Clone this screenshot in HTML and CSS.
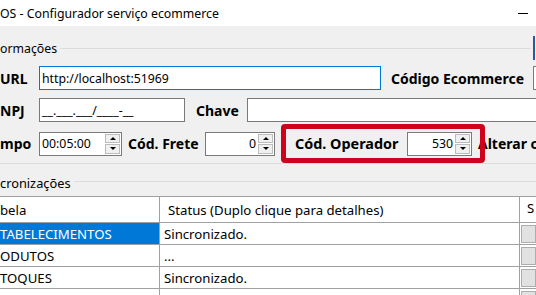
FILE: index.html
```html
<!DOCTYPE html>
<html lang="pt-BR">
<head>
    <meta charset="UTF-8">
    <title>Configurador serviço ecommerce</title>
    <link rel="stylesheet" href="styles.css">
</head>
<body>
    <div class="titlebar">
        <span class="title">OS - Configurador serviço ecommerce</span>
        <span class="minimize"></span>
    </div>

    <div class="client">
        <section class="group group-info">
            <div class="group-header">
                <span class="group-title">ormações</span>
                <span class="group-line"></span>
                <span class="focus-edge"></span>
            </div>

            <div class="form-row row-url">
                <span class="field-label lbl-first">URL</span>
                <div class="textbox focused tb-url">http://localhost:51969</div>
                <span class="field-label lbl-ecommerce">Código Ecommerce</span>
                <div class="textbox tb-overflow"></div>
            </div>

            <div class="form-row row-cnpj">
                <span class="field-label lbl-first">NPJ</span>
                <div class="textbox tb-cnpj">__.___.___/____-__</div>
                <span class="field-label lbl-chave">Chave</span>
                <div class="textbox tb-chave"></div>
            </div>

            <div class="form-row row-tempo">
                <span class="field-label lbl-first">mpo</span>
                <div class="spinbox sb-tempo">
                    <span class="spin-value left">00:05:00</span>
                    <span class="spin-buttons"><span class="spin-up"></span><span class="spin-down"></span></span>
                </div>
                <span class="field-label lbl-frete">Cód. Frete</span>
                <div class="spinbox sb-frete">
                    <span class="spin-value">0</span>
                    <span class="spin-buttons"><span class="spin-up"></span><span class="spin-down"></span></span>
                </div>
                <div class="highlight">
                    <span class="field-label lbl-operador">Cód. Operador</span>
                    <div class="spinbox sb-operador">
                        <span class="spin-value">530</span>
                        <span class="spin-buttons"><span class="spin-up"></span><span class="spin-down"></span></span>
                    </div>
                </div>
                <span class="field-label lbl-alterar">Alterar c</span>
            </div>
        </section>

        <section class="group group-sync">
            <div class="group-header">
                <span class="group-title">cronizações</span>
                <span class="group-line"></span>
            </div>

            <div class="grid">
                <div class="grid-row grid-head">
                    <div class="cell">bela</div>
                    <div class="cell col-status">Status (Duplo clique para detalhes)</div>
                    <div class="cell col-action">S</div>
                </div>
                <div class="grid-row">
                    <div class="cell selected">TABELECIMENTOS</div>
                    <div class="cell col-status">Sincronizado.</div>
                    <div class="cell col-action"><span class="cell-button"></span></div>
                </div>
                <div class="grid-row">
                    <div class="cell">ODUTOS</div>
                    <div class="cell col-status">...</div>
                    <div class="cell col-action"><span class="cell-button"></span></div>
                </div>
                <div class="grid-row">
                    <div class="cell">TOQUES</div>
                    <div class="cell col-status">Sincronizado.</div>
                    <div class="cell col-action"><span class="cell-button"></span></div>
                </div>
                <div class="grid-row">
                    <div class="cell"></div>
                    <div class="cell col-status"></div>
                    <div class="cell col-action"><span class="cell-button"></span></div>
                </div>
            </div>
        </section>
    </div>
</body>
</html>
```

FILE: styles.css
```css
:root {
    --window: #f0f0f0;
    --text: #000000;
    --border: #7a7a7a;
    --focus: #0078d7;
    --group-line: #dcdcdc;
    --grid-line: #a0a0a0;
    --button: #e1e1e1;
    --button-border: #adadad;
    --highlight: #d0021b;
}

* {
    margin: 0;
    padding: 0;
    box-sizing: border-box;
}

body {
    width: 536px;
    height: 295px;
    overflow: hidden;
    background-color: var(--window);
    color: var(--text);
    font-family: "Noto Sans", "DejaVu Sans", sans-serif;
    font-size: 12.3px;
}

.titlebar {
    height: 26px;
    background-color: #ffffff;
    display: flex;
    align-items: center;
    justify-content: space-between;
    padding-right: 8px;
}

.minimize {
    width: 10px;
    height: 1px;
    background-color: #000000;
}

.client {
    padding-top: 10px;
}

.group-header {
    height: 24px;
    display: flex;
    align-items: center;
}

.group-title {
    padding-right: 3px;
    white-space: nowrap;
}

.group-line {
    flex: 1;
    height: 1px;
    background-color: var(--group-line);
}

.focus-edge {
    width: 2px;
    height: 24px;
    margin: 0 1px 0 2px;
    background-color: #2d5a9c;
}

.group-info {
    border-bottom: 1px solid var(--group-line);
}

.form-row {
    display: flex;
    align-items: center;
    white-space: nowrap;
}

.row-url {
    margin-top: 6px;
}

.row-cnpj {
    margin-top: 8px;
}

.row-tempo {
    margin-top: 2px;
}

.field-label {
    flex-shrink: 0;
    font-weight: bold;
    font-size: 14px;
}

.lbl-first { width: 39px; }
.lbl-ecommerce { width: 142px; margin-left: 10px; }
.lbl-chave { width: 51px; margin-left: 11px; }
.lbl-frete { width: 77px; margin-left: 6px; }
.lbl-operador { width: 112px; font-size: 14.4px; }
.lbl-alterar { margin-left: -7px; }

.textbox,
.spinbox {
    flex-shrink: 0;
    height: 24px;
    background-color: #ffffff;
    border: 1px solid var(--border);
    display: flex;
    align-items: center;
    padding-left: 2px;
}

.textbox.focused {
    border-color: var(--focus);
}

.tb-url { width: 342px; }
.tb-overflow { width: 40px; }
.tb-cnpj { width: 146px; }
.tb-chave { width: 320px; }

.sb-tempo { width: 83px; }
.sb-frete { width: 70px; }
.sb-operador { width: 65px; }

.spin-value {
    flex: 1;
    text-align: right;
    padding-right: 2px;
}

.spin-value.left {
    text-align: left;
}

.spin-buttons {
    width: 15px;
    height: 20px;
    margin-right: 1px;
    display: flex;
    flex-direction: column;
    gap: 1px;
}

.spin-up,
.spin-down {
    flex: 1;
    background-color: #f0f0f0;
    border: 1px solid #bcbcbc;
    display: flex;
    align-items: center;
    justify-content: center;
}

.spin-up::after,
.spin-down::after {
    content: "";
    border-left: 3px solid transparent;
    border-right: 3px solid transparent;
}

.spin-up::after {
    border-bottom: 3px solid #000000;
}

.spin-down::after {
    border-top: 3px solid #000000;
}

.highlight {
    position: relative;
    z-index: 1;
    flex-shrink: 0;
    width: 204px;
    height: 39px;
    margin-left: 6px;
    padding: 0 8px 0 9px;
    border: 5px solid var(--highlight);
    border-radius: 4px;
    display: flex;
    align-items: center;
}

.group-sync .group-header {
    margin-top: 8px;
    height: 22px;
}

.group-sync .group-title {
    font-size: 12.8px;
}

.group-sync .group-line {
    margin-bottom: 4px;
}

.grid {
    margin-top: 2px;
    border-top: 1px solid var(--grid-line);
    background-color: #ffffff;
    font-size: 13.2px;
}

.grid-row {
    display: grid;
    grid-template-columns: 160px 360px 1fr;
    height: 22px;
}

.grid-head {
    height: 26px;
}

.cell {
    border-right: 1px solid var(--grid-line);
    border-bottom: 1px solid var(--grid-line);
    display: flex;
    align-items: center;
    white-space: nowrap;
    overflow: hidden;
}

.col-status {
    padding-left: 4px;
}

.grid-head .col-status {
    padding-left: 8px;
}

.grid-head .col-action {
    padding-left: 7px;
}

.col-action {
    border-right: none;
    padding: 2px 0 1px 1px;
    align-items: stretch;
}

.cell-button {
    flex: 1;
    background-color: var(--button);
    border: 1px solid var(--button-border);
}

.selected {
    background-color: var(--focus);
    color: #ffffff;
}
```
